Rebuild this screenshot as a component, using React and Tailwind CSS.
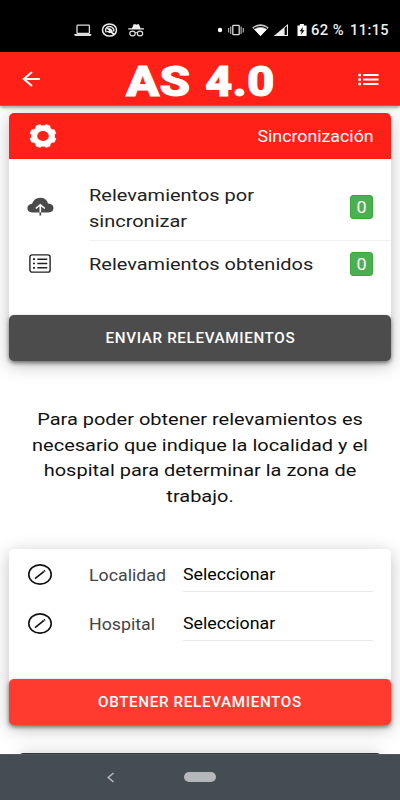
const StatusBar = () => (
  <div className="h-[52px] shrink-0 bg-black flex text-[#eee]">
    {/* Notifications */}
    <svg className="w-[72px] h-4 mt-[22px] ml-[74px]" viewBox="0 0 72 16" fill="none">
      <rect x="3" y="3.2" width="12.4" height="8.3" rx="0.8" stroke="#ddd" strokeWidth="1.3" />
      <path d="M.3 12h17v1.1q-.2.9-1.2.9H1.5q-1 0-1.2-.9Z" fill="#ddd" />
      <ellipse cx="35.5" cy="8" rx="7" ry="6.1" stroke="#eee" strokeWidth="1.5" />
      <path d="M32.3 10.3Q30.6 7.6 32.6 5.6 35.2 3.6 38 5.2 40.6 7 39.6 9.6" stroke="#eee" strokeWidth="1.3" />
      <path d="M32.3 6.2q3-.6 5 .8 1.6 1.4 1.6 3.4l2.6 1.7-1.6 1.4-3-2.4q-3.6-.2-4.3-2.2l2.8.2Z" fill="#eee" />
      <path d="M58 6.3 59.6 2.2h2l.8.5.8-.5h1.7l1.6 4.1H70v1.2H54.2V6.3Z" fill="#eee" />
      <ellipse cx="58.5" cy="11.5" rx="2.7" ry="2.3" stroke="#ddd" strokeWidth="1.2" />
      <ellipse cx="66" cy="11.5" rx="2.7" ry="2.3" stroke="#ddd" strokeWidth="1.2" />
      <path d="M61 11q1.2-1 2.4 0" stroke="#ddd" />
    </svg>
    {/* System */}
    <svg className="w-[92px] h-4 mt-[22px] ml-[70px]" viewBox="0 0 92 16" fill="none">
      <circle cx="4" cy="8" r="2.2" fill="#fff" />
      <path d="M12.6 6v4.5M14.7 4.5v7.5M25.1 4.5v7.5M27.3 6v4.5" stroke="#aaa" strokeWidth="1.2" />
      <rect x="16.8" y="3.3" width="6.4" height="9.4" rx=".6" stroke="#ddd" strokeWidth="1.3" />
      <path d="M36.2 5.5Q44.5-1 52.8 5.5L44.5 14Z" fill="#ccc" />
      <path d="M38 6.5q6.5-4 13 0" stroke="#000" strokeWidth="1.1" />
      <path d="M38.5 7.6q6-3.2 12 0L44.5 14Z" fill="#fff" />
      <path d="M72 2v12H57.8Z" fill="#eee" />
      <path d="M68.6 6v7h2.3V4.1Z" fill="#000" />
      <path d="M81.5 3.4h2.4V2h4v1.4h2.7V14h-9.1Z" fill="#fff" />
      <path d="M86.9 5 83.6 9.2h2.1l-.7 3.5 3.5-4.4h-2.1Z" fill="#000" />
    </svg>
    <div className="mt-[20px] ml-[3px] w-[33px] text-[14px] leading-5 font-medium tracking-[0.4px]">
      <span className="inline-block origin-left scale-x-[1.06] whitespace-nowrap">62 %</span>
    </div>
    <div className="mt-[20px] ml-[6px] text-[14px] leading-5 font-medium tracking-[0.4px]">
      <span className="inline-block origin-left scale-x-[1.04]">11:15</span>
    </div>
  </div>
);

const Header = () => (
  <div className="h-[54px] shrink-0 bg-[#ff2117] flex items-center justify-between pl-[22px] pr-[21px] text-white border-b border-[#f3443d] shadow-[0_1px_4px_rgba(0,0,0,0.5)] z-10">
    <svg className="w-[19px] h-[16px]" viewBox="0 0 19 16" fill="none" stroke="#fff" strokeWidth="2">
      <path d="M18 8H1.8M10 .9 1.8 8l8.2 7.1" />
    </svg>
    <h1 className="w-[149px] ml-[1px] h-[44px] flex justify-between font-black text-[42px] leading-[49px] whitespace-nowrap [-webkit-text-stroke:0.8px_white]">
      <span className="inline-block w-[64px] origin-left scale-x-[1.17]">AS</span>
      <span className="inline-block w-[70px] origin-left scale-x-[1.13]">4.0</span>
    </h1>
    <svg className="w-[21px] h-[13px] mt-[1px]" viewBox="0 0 21 13" fill="none" stroke="#fff" strokeWidth="1.8">
      <path d="M5 2h15.5M5 6.5h15.5M5 11h15.5" />
      <path d="M1.6 2h.01M1.6 6.5h.01M1.6 11h.01" strokeWidth="3" strokeLinecap="round" />
    </svg>
  </div>
);

// outline of the eight teeth, as [angle, radius] inside each 45 degree sector
const tooth = [
  [7, 0.87],
  [13, 1],
  [32, 1],
  [38, 0.87],
];
const gearPoints = [0, 1, 2, 3, 4, 5, 6, 7]
  .flatMap((i) =>
    tooth.map(([deg, r]) => {
      const a = ((deg + i * 45) * Math.PI) / 180;
      return `${(14 + 13.3 * r * Math.cos(a)).toFixed(2)},${(12 + 11.8 * r * Math.sin(a)).toFixed(2)}`;
    })
  )
  .join(" ");

const GearIcon = () => (
  <svg className="w-[28px] h-[24px]" viewBox="0 0 28 24">
    <polygon points={gearPoints} fill="#fff" stroke="#fff" strokeWidth="0.6" strokeLinejoin="round" />
    <ellipse cx="14" cy="12" rx="5.8" ry="5.1" fill="#ff2117" />
  </svg>
);

const CloudIcon = () => (
  <svg className="w-[27px] h-[19px]" viewBox="0 0 27 19" fill="none">
    <path
      d="M5 15.5Q.4 15 .4 11.3.5 7.6 5 6.8 7.2.8 13 .8 19.6.8 21 6.4q5.5.3 5.5 4.6 0 4.2-5 4.5Z"
      fill="#4a4a4a"
    />
    <path d="M13.3 15.5V8M8.8 11.5 13.3 7.7l4.5 3.8" stroke="#fff" strokeWidth="1.6" />
    <path d="M13.3 15.5v3" stroke="#444" strokeWidth="1.7" />
  </svg>
);

const ListIcon = () => (
  <svg className="w-[22px] h-[19px]" viewBox="0 0 22 19" fill="none" stroke="#222" strokeWidth="1.4">
    <rect x=".9" y=".9" width="20.2" height="17.2" rx="2.2" />
    <path d="M8.3 5.2h10M8.3 9.5h10M8.3 13.8h10" strokeWidth="1.5" />
    <path d="M4 5.2h2M4 9.5h2M4 13.8h2" strokeWidth="1.7" />
  </svg>
);

const CompassIcon = () => (
  <svg className="w-[24px] h-[21px]" viewBox="0 0 24 21" fill="none" stroke="#111">
    <ellipse cx="12" cy="10.5" rx="11.2" ry="9.6" strokeWidth="1.6" />
    <path d="m7 14.7 8.1-6.5" strokeWidth="1.6" />
    <path d="m15 8.2 2.2-1.8" strokeWidth="1.8" strokeDasharray="1 .6" />
  </svg>
);

const Badge = ({ children }) => (
  <div className="w-[23px] h-[24px] rounded-[3px] bg-[#4caf50] border border-[#38a83c] text-white text-[16px] flex items-center justify-center">
    <span className="scale-x-[1.12] pt-px">{children}</span>
  </div>
);

const SelectRow = ({ label }) => (
  <div className="h-[49px] flex pl-[19px] pr-[18px]">
    <div className="w-[61px] pt-[6px]">
      <CompassIcon />
    </div>
    <div className="w-[94px] text-[16px] leading-[36px] text-[#444]">
      <span className="inline-block origin-left scale-x-[1.11]">{label}</span>
    </div>
    <div className="flex-1 h-[34px] border-b border-[#e8e8e8] text-[16px] leading-[34px] text-black">
      <span className="inline-block origin-left scale-x-[1.11]">Seleccionar</span>
    </div>
  </div>
);

const App = () => {
  return (
    <div className="w-[400px] h-[800px] overflow-hidden flex flex-col bg-white font-[Roboto,sans-serif]">
      <StatusBar />
      <Header />

      <div className="h-[648px] shrink-0 overflow-hidden px-[9px] pt-[7px]">
        {/* Sync card */}
        <div className="h-[248px] rounded-[5px] bg-white flex flex-col shadow-[0_4px_18px_rgba(0,0,0,0.25)]">
          <div className="h-[46px] rounded-t-[5px] bg-[#ff2117] border-b border-[#ff1a10] flex items-center justify-between pl-[20px] pr-[17px] text-white">
            <GearIcon />
            <span className="inline-block origin-right scale-x-[1.11] pt-[2px] text-[16px]">Sincronización</span>
          </div>
          <div className="flex h-[82px] pl-[18px]">
            <div className="w-[62px] pt-[38px]">
              <CloudIcon />
            </div>
            <div className="flex-1 flex justify-between border-b border-[#f0f0f0] pr-[18px]">
              <p className="origin-left scale-x-[1.175] pt-[24px] text-[17px] leading-[25.5px] text-[#222]">
                Relevamientos por
                <br />
                sincronizar
              </p>
              <div className="pt-[36px]">
                <Badge>0</Badge>
              </div>
            </div>
          </div>
          <div className="flex h-[74px] pl-[20px] pr-[18px]">
            <div className="w-[60px] pt-[13px]">
              <ListIcon />
            </div>
            <div className="flex-1 flex justify-between">
              <p className="origin-left scale-x-[1.175] pt-[11px] text-[17px] leading-[25px] text-[#222]">
                Relevamientos obtenidos
              </p>
              <div className="pt-[11px]">
                <Badge>0</Badge>
              </div>
            </div>
          </div>
          <button className="h-[46px] rounded-[5px] bg-[#4c4c4c] text-white text-[14px] font-medium tracking-[0.6px] shadow-[0_2px_4px_rgba(0,0,0,0.5)]">
            <span className="inline-block scale-x-[1.085]">ENVIAR RELEVAMIENTOS</span>
          </button>
        </div>

        <p className="mt-[46px] h-[103px] text-center text-[17px] leading-[25.7px] text-[#111] scale-x-[1.175]">
          Para poder obtener relevamientos es
          <br />
          necesario que indique la localidad y el
          <br />
          hospital para determinar la zona de
          <br />
          trabajo.
        </p>

        {/* Location card */}
        <div className="mt-[39px] h-[176px] rounded-[5px] bg-white flex flex-col shadow-[0_4px_18px_rgba(0,0,0,0.25)]">
          <div className="h-[130px] pt-[9px]">
            <SelectRow label="Localidad" />
            <SelectRow label="Hospital" />
          </div>
          <button className="h-[46px] rounded-[5px] bg-[#ff3b30] text-white text-[14px] font-medium tracking-[0.6px] shadow-[0_2px_4px_rgba(0,0,0,0.5)]">
            <span className="inline-block scale-x-[1.085]">OBTENER RELEVAMIENTOS</span>
          </button>
        </div>

        {/* Next card, cut by the navigation bar */}
        <div className="mt-[28px] mx-[11px] h-[46px] rounded-[3px] bg-[#2f373b] shadow-[0_-2px_14px_rgba(0,0,0,0.15)]" />
      </div>

      {/* Navigation bar */}
      <div className="flex-1 bg-[#444d52] border-t border-[#50595d] flex">
        <svg className="w-[8px] h-[11px] mt-[17px] ml-[107px]" viewBox="0 0 8 11" fill="none" stroke="#bbb" strokeWidth="1.5">
          <path d="M6.5 1 1.2 5.5 6.5 10" />
        </svg>
        <div className="w-[32px] h-[10px] mt-[17px] ml-[69px] rounded-full bg-[#b5b8ba]" />
      </div>
    </div>
  );
};

export default App;
